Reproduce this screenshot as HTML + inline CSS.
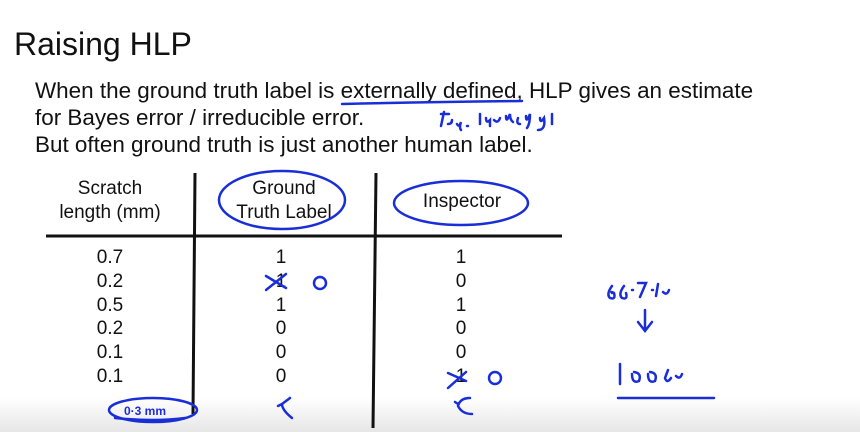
<!DOCTYPE html>
<html><head><style>
body{margin:0;width:860px;height:432px;background:#fff;overflow:hidden;position:relative;font-family:"Liberation Sans",sans-serif;color:#111}
.t{position:absolute;white-space:nowrap}
.c{position:absolute;font-size:19px;text-align:center;transform:translateX(-50%);line-height:23.8px;white-space:nowrap}
</style></head><body>
<div class="t" style="left:14px;top:26px;font-size:32px">Raising HLP</div>
<div class="t" style="left:35px;top:77px;font-size:22px;line-height:27px;transform:scaleX(1.02);transform-origin:left">When the ground truth label is externally defined, HLP gives an estimate<br>for Bayes error / irreducible error.<br>But often ground truth is just another human label.</div>
<div class="c" style="left:110px;top:177px;line-height:24px">Scratch<br>length (mm)</div>
<div class="c" style="left:284px;top:177px;line-height:24px">Ground<br>Truth Label</div>
<div class="c" style="left:462px;top:190px">Inspector</div>
<div class="c" style="left:110px;top:246px">0.7<br>0.2<br>0.5<br>0.2<br>0.1<br>0.1</div>
<div class="c" style="left:281px;top:246px">1<br>1<br>1<br>0<br>0<br>0</div>
<div class="c" style="left:461px;top:246px">1<br>0<br>1<br>0<br>0<br>1</div>
<div style="position:absolute;left:0;top:398px;width:860px;height:34px;background:linear-gradient(#fff,#e6e6e6)"></div>
<svg width="860" height="432" style="position:absolute;left:0;top:0">
<g stroke="#111" stroke-width="3"><line x1="46" y1="236" x2="562" y2="236"/><line x1="195" y1="173" x2="193" y2="414"/><line x1="376" y1="173" x2="373" y2="428"/></g>
<g stroke="#1a2ed8" stroke-width="2.5" fill="none" stroke-linecap="round">
<path d="M342 104 Q430 102 522 101"/>
<path d="M444 112 l-3 14 M441 114 h8 M448 124 q4 0 4 -4 M457 124 q2 4 4 -2 q-2 6 0 8 M467 126 h1 M480 124 v-10 M486 118 q0 6 4 2 v6 M494 120 q4 4 6 -2 M506 116 q0 8 4 -2 q0 6 3 8 M518 118 q-2 6 2 6 M526 116 q0 8 4 -2 q0 10 -3 14 M540 118 q0 6 4 0 q2 12 -6 12 M552 114 v10"/>
<ellipse cx="282" cy="200" rx="63" ry="29"/>
<ellipse cx="461" cy="203" rx="67" ry="22"/>
<path d="M266 276 l20 12 M286 274 l-20 16"/>
<circle cx="320" cy="283" r="6"/>
<path d="M448 373 l18 8 M466 372 l-18 16"/>
<circle cx="495" cy="378" r="6"/>
<ellipse cx="153" cy="410" rx="44" ry="12"/>
<path d="M115 418 q40 4 70 0"/>
<path d="M290 398 l-8 6 q0 6 10 14 M282 404 l-4 2"/>
<path d="M470 398 q-10 0 -12 8 q4 8 14 8 M458 404 l-3 -2"/>
<path d="M612 286 q-6 8 -2 12 q6 2 4 -5 q-4 -2 -2 0 M624 286 q-6 8 -2 12 q6 2 4 -5 M632 290 h1 M638 283 h8 l-6 14 M652 290 h1 M658 284 l-2 12 M663 292 q4 4 6 -2"/>
<path d="M645 310 v20 M638 322 l7 9 l7 -9"/>
<path d="M620 364 v20 M632 374 q0 10 7 7 q3 -8 -5 -9 M648 374 q0 10 7 7 q3 -8 -5 -9 M668 370 l-3 8 q2 6 6 0 M676 376 q4 4 6 -2"/>
<path d="M618 398 h96"/>
</g>
<g fill="#1a2ed8" font-family="Liberation Sans" font-weight="bold" font-size="12"><text x="124" y="415">0·3 mm</text></g>
</svg>
</body></html>
